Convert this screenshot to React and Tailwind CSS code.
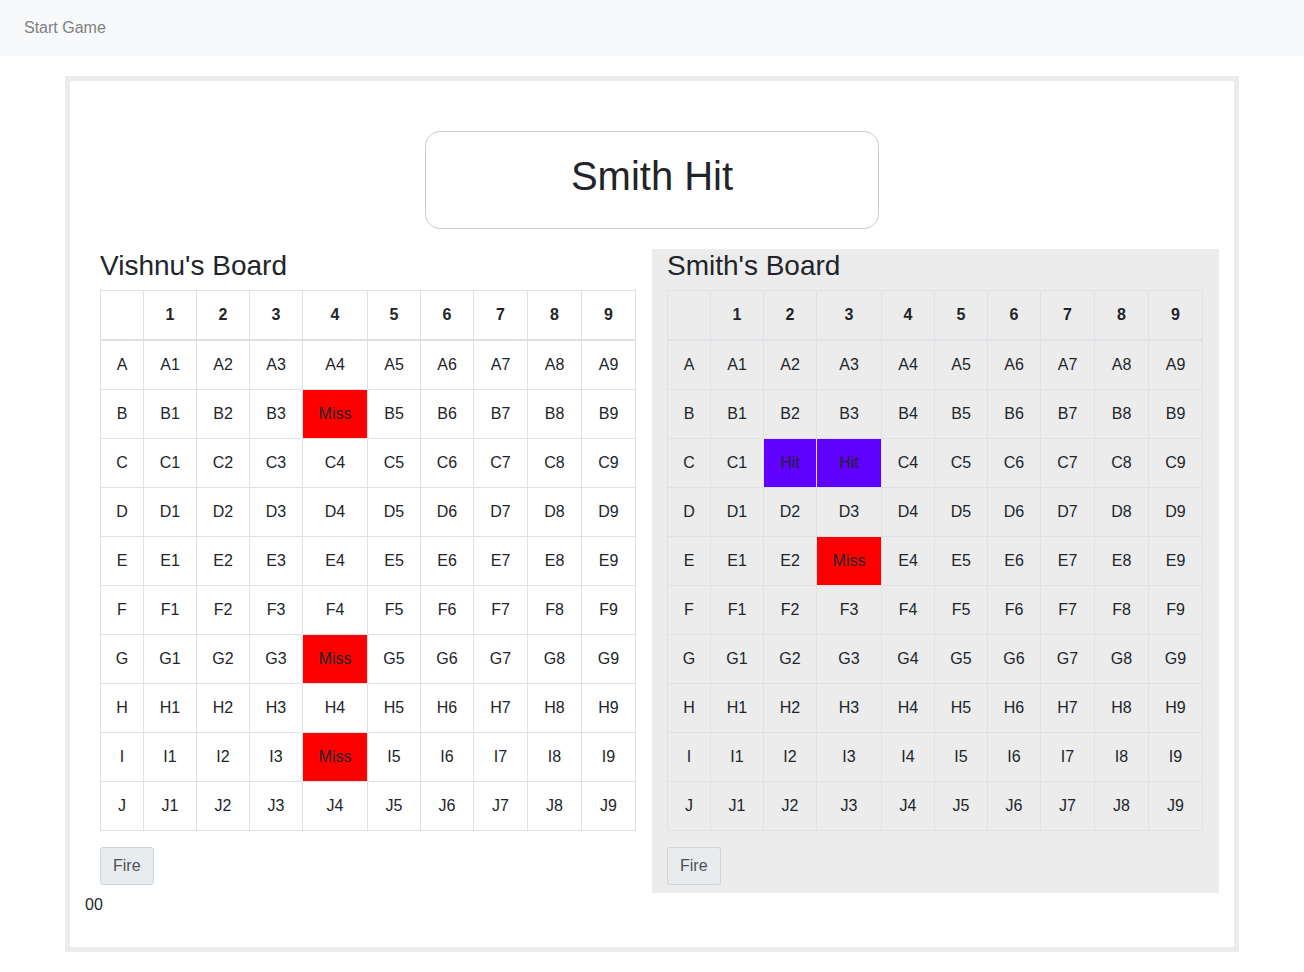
import React from 'react';

const rows = ['A', 'B', 'C', 'D', 'E', 'F', 'G', 'H', 'I', 'J'];
const cols = [1, 2, 3, 4, 5, 6, 7, 8, 9];

// marks per board: cell id -> 'hit' | 'miss'
const vishnuMarks = { B4: 'miss', G4: 'miss', I4: 'miss' };
const smithMarks = { C2: 'hit', C3: 'hit', E3: 'miss' };

const vishnuWidths = [43, 53, 53, 53, 65, 53, 53, 54, 54, 54];
const smithWidths = [43, 53, 53, 65, 53, 53, 53, 54, 54, 54];

function Board({ title, marks, widths, shaded }) {
  return (
    <div className={`w-[567px] px-[15px] ${shaded ? 'bg-[#ececec] pb-2' : ''}`}>
      <h3 className="text-[28px] leading-[1.2] font-medium mb-[7px] text-[#212529]">{title}</h3>
      <table className="w-[536px] table-fixed border-collapse mb-4 text-[#212529]">
        <colgroup>
          {widths.map((w, i) => (
            <col key={i} style={{ width: w }} />
          ))}
        </colgroup>
        <thead>
          <tr>
            <th className="border border-[#dee2e6] border-b-2 p-3 leading-6"></th>
            {cols.map((c) => (
              <th key={c} className="border border-[#dee2e6] border-b-2 p-3 leading-6 font-bold text-center">
                {c}
              </th>
            ))}
          </tr>
        </thead>
        <tbody>
          {rows.map((r) => (
            <tr key={r}>
              <td className="border border-[#dee2e6] p-3 leading-6 text-center">{r}</td>
              {cols.map((c) => {
                const id = `${r}${c}`;
                const mark = marks[id];
                let cls = '';
                let text = id;
                if (mark === 'miss') {
                  cls = 'bg-[#ff0000]';
                  text = 'Miss';
                } else if (mark === 'hit') {
                  cls = 'bg-[#6000ff]';
                  text = 'Hit';
                }
                return (
                  <td key={c} className={`border border-[#dee2e6] p-3 leading-6 text-center ${cls}`}>
                    {text}
                  </td>
                );
              })}
            </tr>
          ))}
        </tbody>
      </table>
      <button className="px-3 py-1.5 leading-6 bg-[#e9ecef] border border-[#ced4da] rounded-[3px] text-[#495057]">
        Fire
      </button>
    </div>
  );
}

export default function App() {
  return (
    <div className="min-h-screen bg-white text-base text-[#212529]" style={{ fontFamily: '"Liberation Sans", Arial, sans-serif' }}>
      <nav className="h-14 bg-[#f8f9fa] flex items-center px-4">
        <span className="px-2 text-[#808080]">Start Game</span>
      </nav>

      <div className="w-[1174px] mx-auto mt-5 border-[5px] border-[#ececec] px-[15px] pt-[50px] pb-[30px]">
        <div className="mx-auto w-[454px] h-[98px] border border-[#cccccc] rounded-[15px] flex justify-center pt-[20px]">
          <h1 className="text-[40px] leading-[48px] font-medium text-[#212529]">Smith Hit</h1>
        </div>

        <div className="flex mt-5">
          <Board title="Vishnu's Board" marks={vishnuMarks} widths={vishnuWidths} />
          <Board title="Smith's Board" marks={smithMarks} widths={smithWidths} shaded />
        </div>

        <div className="leading-6">00</div>
      </div>
    </div>
  );
}
